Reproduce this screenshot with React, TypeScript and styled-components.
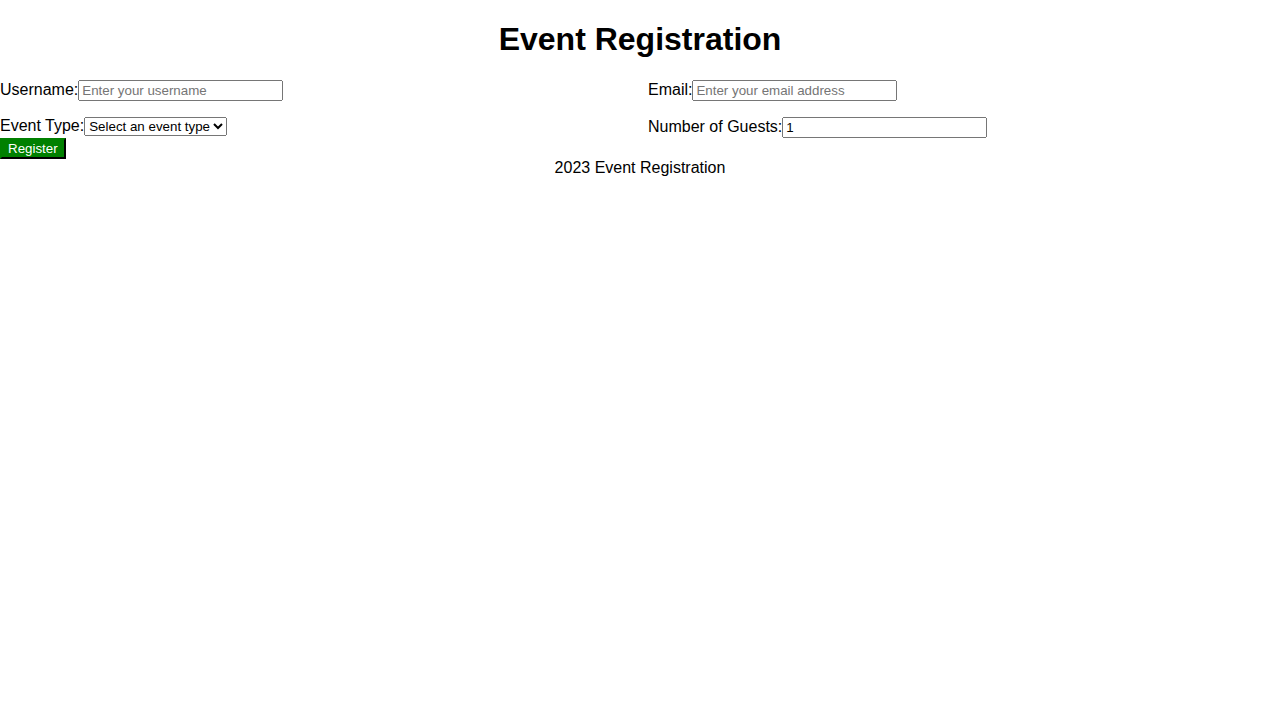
import React from "react";
import styled, { createGlobalStyle } from "styled-components";

const Global = createGlobalStyle`
  body {
    margin: 0;
    font-family: "Liberation Sans", Arial, sans-serif;
    font-size: 16px;
    color: #000;
    background: #fff;
  }
`;

const Title = styled.h1`
  text-align: center;
  font-size: 2em;
  font-weight: bold;
  margin: 0.67em 0;
`;

const FieldGrid = styled.div`
  display: grid;
  grid-template-columns: 1fr 1fr;
  gap: 16px;
`;

const Field = styled.div``;

const Label = styled.label``;

const TextInput = styled.input`
  box-sizing: border-box;
  width: 205px;
  height: 21px;
  font-family: "Liberation Sans", Arial, sans-serif;
  font-size: 13.333px;
`;

const Select = styled.select`
  font-family: "Liberation Sans", Arial, sans-serif;
  font-size: 13.333px;
`;

const Button = styled.button`
  display: block;
  background-color: green;
  color: #fff;
  font-family: "Liberation Sans", Arial, sans-serif;
  font-size: 13.333px;
  padding: 1px 6px;
  border: 2px outset #000;
  border-top-color: green;
  border-left-color: green;
`;

const Footer = styled.footer`
  text-align: center;
  line-height: 18px;
`;

export default function App() {
  return (
    <>
      <Global />
      <Title>Event Registration</Title>
      <form onSubmit={(e) => e.preventDefault()}>
        <FieldGrid>
          <Field>
            <Label htmlFor="username">Username:</Label>
            <TextInput id="username" type="text" placeholder="Enter your username" />
          </Field>
          <Field>
            <Label htmlFor="email">Email:</Label>
            <TextInput id="email" type="email" placeholder="Enter your email address" />
          </Field>
          <Field>
            <Label htmlFor="etype">Event Type:</Label>
            <Select id="etype" defaultValue="">
              <option value="">Select an event type</option>
              <option value="conf">Conference</option>
              <option value="workshop">Workshop</option>
            </Select>
          </Field>
          <Field>
            <Label htmlFor="guests">Number of Guests:</Label>
            <TextInput id="guests" type="number" defaultValue={1} min={1} />
          </Field>
        </FieldGrid>
        <Button type="submit">Register</Button>
      </form>
      <Footer>2023 Event Registration</Footer>
    </>
  );
}
